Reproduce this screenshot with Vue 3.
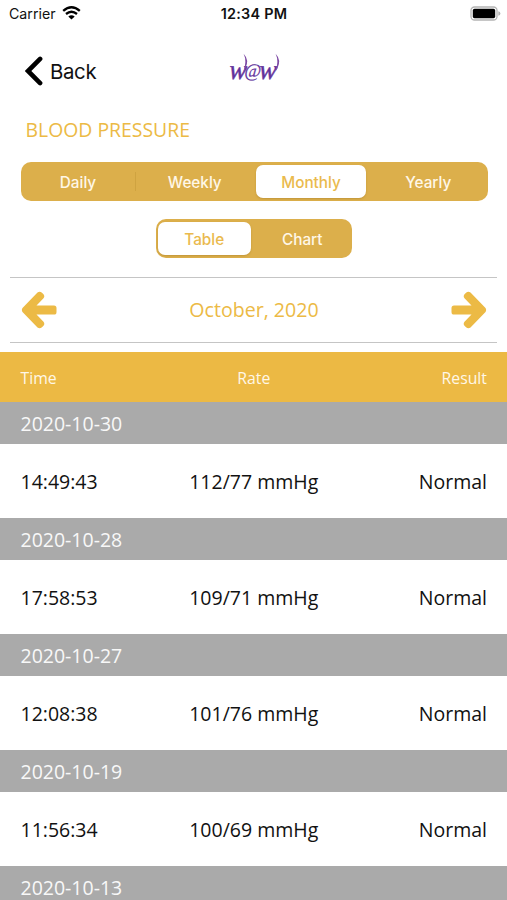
<script setup>
const periods = ['Daily', 'Weekly', 'Monthly', 'Yearly']
const views = ['Table', 'Chart']
const groups = [
  { date: '2020-10-30', time: '14:49:43', rate: '112/77 mmHg', result: 'Normal' },
  { date: '2020-10-28', time: '17:58:53', rate: '109/71 mmHg', result: 'Normal' },
  { date: '2020-10-27', time: '12:08:38', rate: '101/76 mmHg', result: 'Normal' },
  { date: '2020-10-19', time: '11:56:34', rate: '100/69 mmHg', result: 'Normal' },
  { date: '2020-10-13' },
]
const arrow = 'M1.5 17L16.5 1.5Q18.7-.2 21 1.8L22.7 3.5Q24 5.5 22.5 7.3L15.5 14.4H33Q35.5 14.4 35.5 17V21Q35.5 23.6 33 23.6H15.5L22.5 30.7Q24 32.5 22.7 34.5L21 36.2Q18.7 38.2 16.5 36.5L1.5 21Q.2 19 1.5 17Z'
</script>

<template>
  <main class="screen">
    <header class="status">
      <div class="carrier">
        <span>Carrier</span>
        <svg class="wifi" width="19" height="14" viewBox="0 0 19 14">
          <path d="M1.2 4.9Q9.5 -2.4 17.8 4.9M4 8Q9.5 3.4 15 8" fill="none" stroke="#000" stroke-width="2.3" />
          <path d="M6.3 10.5Q9.5 7.9 12.7 10.5L9.5 13.6Z" />
        </svg>
      </div>
      <span class="clock">12:34 PM</span>
      <svg class="battery" width="31" height="15" viewBox="0 0 31 15">
        <rect x="1" y="1" width="26" height="13" rx="3.5" fill="#fff" stroke="#b4b4b4" stroke-width="1.3" />
        <rect x="2.8" y="2.8" width="22.4" height="9.4" rx="1.7" />
        <path d="M28.3 5.2Q30.4 5.8 30.4 7.5T28.3 9.8Z" fill="#b4b4b4" />
      </svg>
    </header>

    <nav class="nav">
      <div class="back">
        <svg width="18" height="30" viewBox="0 0 18 30">
          <path d="M15.1 2.9L3 15L15.1 27.1" fill="none" stroke="#000" stroke-width="4.6" stroke-linecap="round" />
        </svg>
        <span>Back</span>
      </div>
      <svg class="logo" width="54" height="36" viewBox="0 0 54 36">
        <text class="mark" transform="translate(1.5 27.5) skewX(-5) scale(.95 1)"><tspan>w</tspan><tspan class="at" dx="-2.5" dy="-1.5">@</tspan><tspan dx="-2" dy="1.5">w</tspan></text>
        <g fill="#7d4aa4">
          <path d="M16.6 2.8Q22.6 9 18.4 17.5L16.4 20.5Q20.2 10 16.6 2.8Z" />
          <path d="M48.6 2.8Q54.6 9 50.4 17.5L48.4 20.5Q52.2 10 48.6 2.8Z" />
        </g>
      </svg>
    </nav>

    <h1 class="title">BLOOD PRESSURE</h1>

    <div class="segments periods">
      <div v-for="p in periods" :key="p" class="segment" :class="{ active: p === 'Monthly', divided: p === 'Daily' }">{{ p }}</div>
    </div>
    <div class="segments views">
      <div v-for="v in views" :key="v" class="segment" :class="{ active: v === 'Table' }">{{ v }}</div>
    </div>

    <section class="month">
      <svg width="36" height="38" viewBox="0 0 36 38"><path :d="arrow" /></svg>
      <span>October, 2020</span>
      <svg class="next" width="36" height="38" viewBox="0 0 36 38"><path :d="arrow" /></svg>
    </section>

    <section class="readings">
      <div class="columns head-row"><span>Time</span><span>Rate</span><span>Result</span></div>
      <template v-for="g in groups" :key="g.date">
        <div class="date">{{ g.date }}</div>
        <div v-if="g.time" class="columns reading">
          <span>{{ g.time }}</span><span>{{ g.rate }}</span><span>{{ g.result }}</span>
        </div>
      </template>
    </section>
  </main>
</template>

<style>
body { background: #fff; overflow: hidden; }
</style>

<style scoped>
.screen { box-sizing: border-box; width: 507px; height: 900px; overflow: hidden; background: #fff; font-family: "Open Sans", sans-serif; color: #111; }
svg { display: block; flex: none; }
.status { display: grid; grid-template-columns: 1fr auto 1fr; align-items: center; height: 27px; padding: 0 6px 0 9px; font-family: Inter, sans-serif; font-size: 14.2px; }
.carrier { display: flex; align-items: center; gap: 6px; }
.wifi { margin-bottom: 2px; }
.clock { margin-right: 2px; font-weight: 600; font-size: 14.4px; letter-spacing: .25px; }
.battery { justify-self: end; }
.nav { display: grid; grid-template-columns: 1fr 54px 1fr; height: 87px; padding: 0 25px; align-items: center; }
.back { display: flex; align-items: center; gap: 7px; font: 20.4px/30px Inter, sans-serif; letter-spacing: -.35px; }
.back span { padding-top: 2px; }
.logo { margin-bottom: 4px; overflow: visible; }
.mark { font: italic 400 28px "Liberation Serif", serif; fill: #62319b; stroke: #62319b; stroke-width: .5px; }
.at { font-size: 19px; stroke-width: .2px; }
.title { margin: 0 0 0 25.5px; padding-top: 1px; height: 47px; box-sizing: border-box; font-size: 19.4px; line-height: 30px; font-weight: 400; color: #ecba45; }
.segments { display: grid; box-sizing: border-box; height: 39px; padding: 3px 2px; border-radius: 10px; background: #dcaf4b; font: 500 15.3px/35px Inter, sans-serif; color: #fff7e7; }
.periods { grid-template-columns: 113px 120.5px 110px 1fr; width: 467px; margin: 1px 0 18px 20.5px; }
.views { grid-template-columns: 92.5px 1fr; width: 196px; margin: 0 0 19px 156px; }
.segment { height: 33px; text-align: center; }
.periods .segment:first-child { padding-right: 2px; }
.periods .segment:nth-child(2) { padding-right: 2px; }
.periods .segment:last-child { padding-left: 5px; }
.views .segment:last-child { padding-left: 4px; }
.active { border-radius: 7px; background: #fff; color: #eaba4d; box-shadow: 0 1px 2px #9c741d66; }
.divided { background: linear-gradient(#cfa340, #cfa340) right center / 1px 19px no-repeat; }
.month { display: flex; justify-content: space-between; align-items: center; box-sizing: border-box; height: 66px; margin: 0 10px 9px; padding: 0 10px 0 11px; border-top: 1.5px solid #c5c5c5; border-bottom: 1.5px solid #c5c5c5; color: #ecba45; font-size: 19.6px; }
.month span { padding-bottom: 1px; }
.month path { fill: #ecba45; }
.next { transform: scaleX(-1); }
.columns { display: grid; grid-template-columns: 1fr 1fr 1fr; align-items: center; padding: 0 20px 0 20.5px; box-sizing: border-box; }
.columns span:nth-child(2) { text-align: center; }
.columns span:nth-child(3) { text-align: right; }
.head-row { height: 50px; padding-top: 1px; background: #ecb944; color: #fff7e7; font-size: 15.8px; }
.date { height: 42px; padding-left: 20.5px; background: #aaa; color: #f8f8f8; font-size: 19.5px; line-height: 43px; }
.reading { height: 74px; font-size: 19.5px; }
</style>
